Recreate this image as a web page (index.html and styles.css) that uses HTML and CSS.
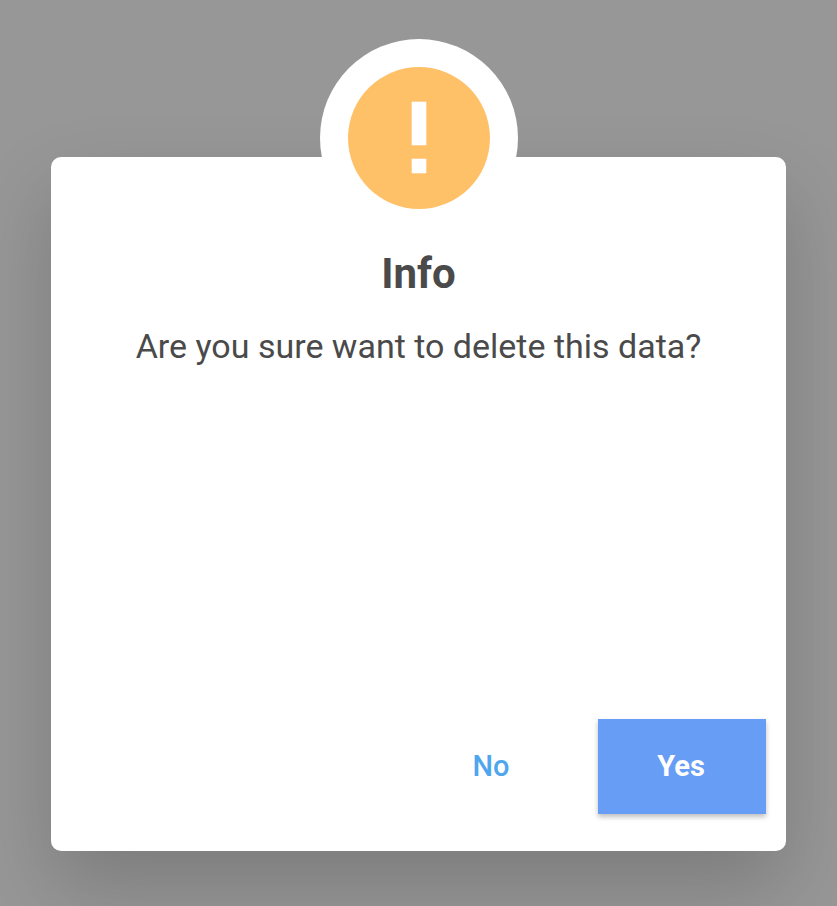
FILE: index.html
```html
<!DOCTYPE html>
<html lang="en">
<head>
<meta charset="utf-8">
<meta name="viewport" content="width=device-width, initial-scale=1">
<title>Info</title>
<link rel="stylesheet" href="styles.css">
</head>
<body>
<main class="overlay">
  <section class="dialog" role="alertdialog" aria-labelledby="title" aria-describedby="message">
    <div class="badge">
      <svg class="badge-icon" viewBox="0 0 142 142" aria-hidden="true">
        <circle cx="71" cy="71" r="71" fill="#ffc168"/>
        <path d="M64 35h14v43H64zM64 92h14v14H64z" fill="#fff" stroke="#fff" stroke-width=".6" stroke-linejoin="round"/>
      </svg>
    </div>
    <h1 class="title" id="title">Info</h1>
    <p class="message" id="message">Are you sure want to delete this data?</p>
    <div class="actions">
      <button class="button" type="button">No</button>
      <button class="button button-primary" type="button">Yes</button>
    </div>
  </section>
</main>
</body>
</html>
```

FILE: styles.css
```css
* {
  box-sizing: border-box;
}

body {
  margin: 0;
  font-family: Roboto, sans-serif;
  color: #4a4a4a;
  background: #979797;
}

.overlay {
  display: flex;
  min-height: 100vh;
  padding: 157px 51px 55px;
}

.dialog {
  position: relative;
  display: flex;
  flex: 1;
  flex-direction: column;
  padding: 95px 20px 37px;
  border-radius: 10px;
  background: #fff;
  box-shadow: 0 36px 80px rgba(0, 0, 0, 0.18);
}

.badge {
  position: absolute;
  top: -118px;
  left: 50%;
  display: grid;
  place-items: center;
  width: 198px;
  height: 198px;
  border-radius: 50%;
  background: #fff;
  transform: translateX(-50%);
}

.badge-icon {
  width: 142px;
  height: 142px;
}

.title {
  margin: 0;
  font-size: 42px;
  font-weight: 700;
  line-height: 44px;
  text-align: center;
}

.message {
  margin: 28px 0 0;
  font-size: 34px;
  line-height: 44px;
  text-align: center;
}

.actions {
  display: flex;
  gap: 22px;
  justify-content: flex-end;
  margin-top: auto;
}

.button {
  width: 168px;
  height: 95px;
  padding: 0 2px 2px 0;
  border: 0;
  font: 500 29px/36px Roboto, sans-serif;
  color: #4da6ee;
  background: none;
  cursor: pointer;
}

.button-primary {
  font-weight: 700;
  color: #fff;
  background: #689df6;
  box-shadow: 0 3px 5px rgba(0, 0, 0, 0.25);
}
```
